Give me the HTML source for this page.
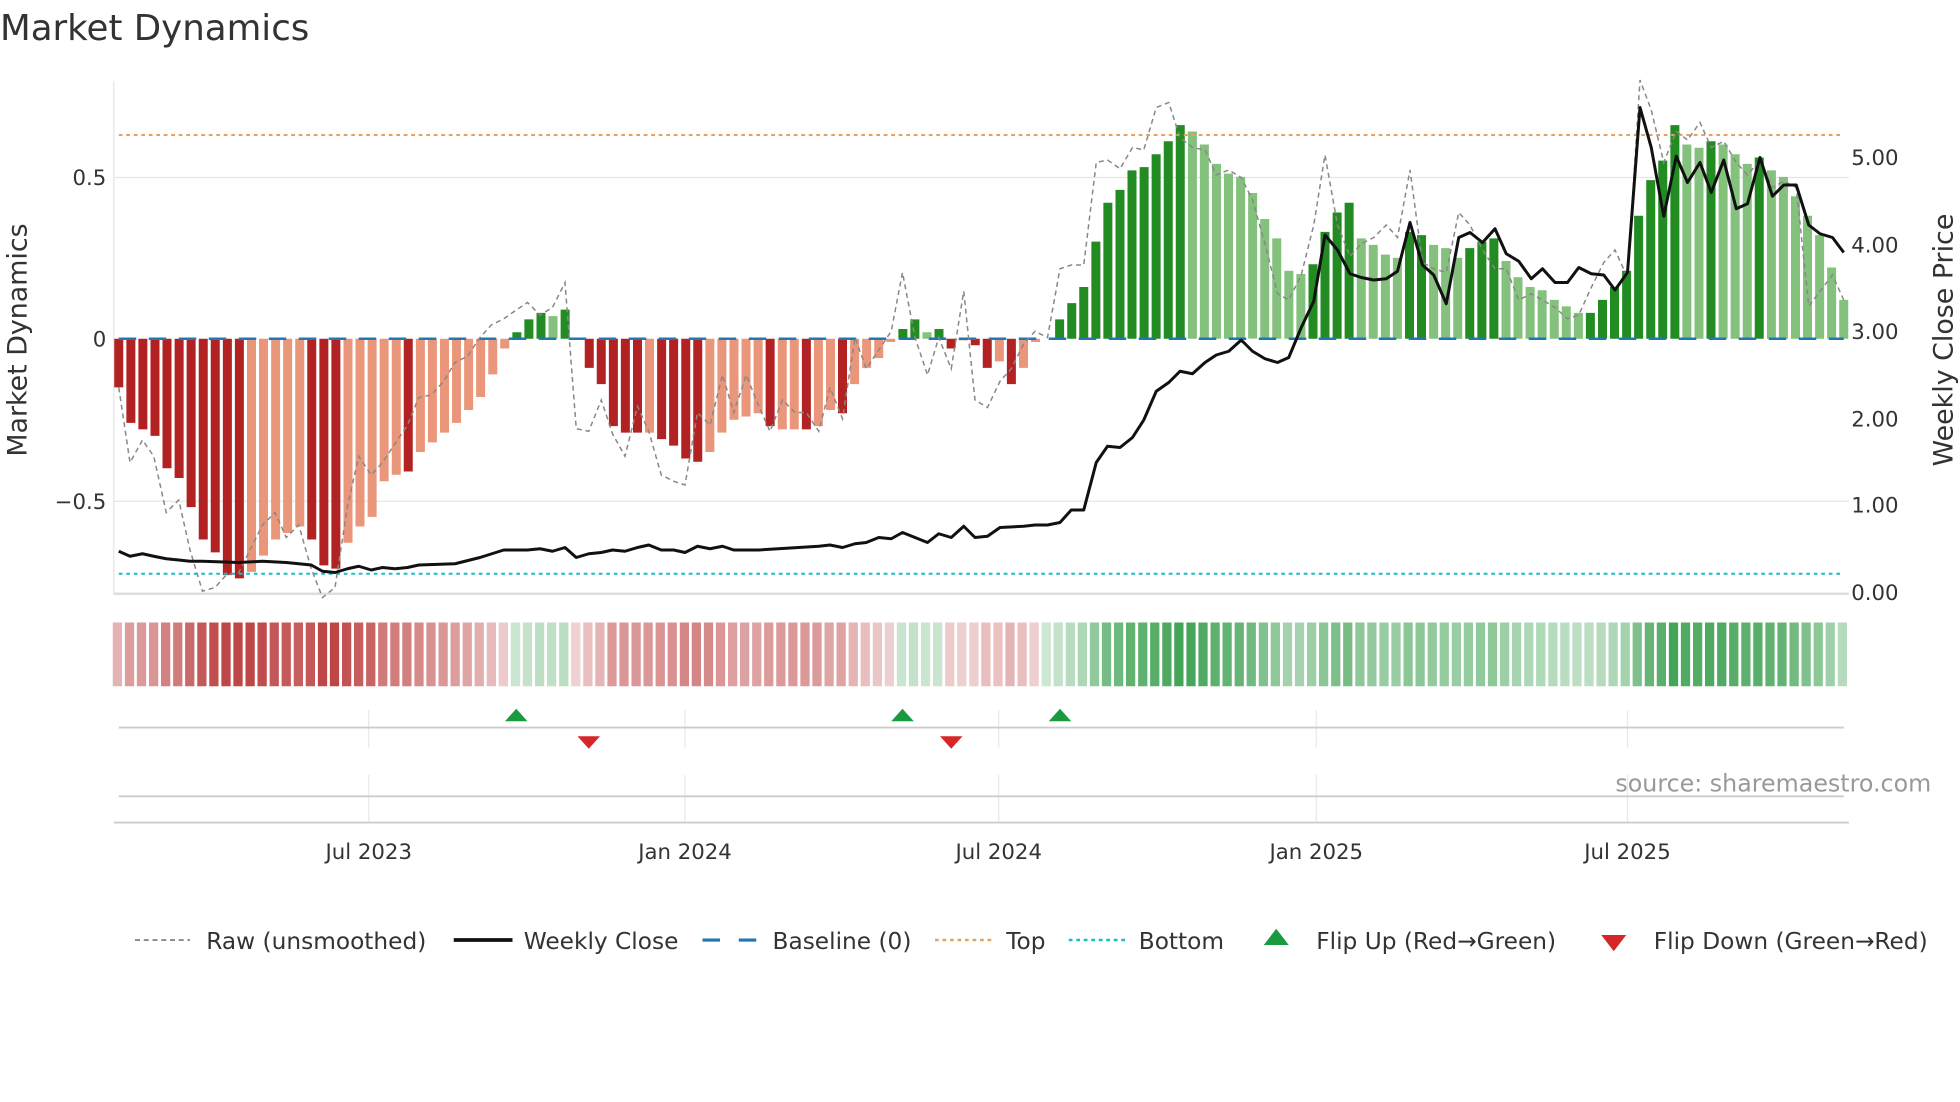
<!DOCTYPE html>
<html><head><meta charset="utf-8"><style>
html,body{margin:0;padding:0;background:#fff;width:1960px;height:1102px;overflow:hidden}
svg{display:block}
text{font-family:"DejaVu Sans","Liberation Sans",sans-serif;fill:#333}
</style></head><body>
<svg id="s" width="1960" height="1102" viewBox="0 0 1568 881.6" xmlns="http://www.w3.org/2000/svg">
<text x="0" y="32" font-size="28.5" fill="#333">Market Dynamics</text>
<g stroke="#e6e6e6" stroke-width="1">
<line x1="91" y1="142" x2="1479" y2="142"/>
<line x1="91" y1="401" x2="1479" y2="401"/>
<line x1="91" y1="475" x2="1479" y2="475" stroke="#ddd" stroke-width="2"/>
<line x1="91" y1="65" x2="91" y2="476"/>
</g>
<g id="bars"></g>
<g id="strip"></g>
<line x1="95" y1="108" x2="1475" y2="108" stroke="#e8a060" stroke-width="1.6" stroke-dasharray="3,3"/>
<line x1="95" y1="459" x2="1475" y2="459" stroke="#17becf" stroke-width="1.6" stroke-dasharray="3,3"/>
<line x1="95" y1="271" x2="1475" y2="271" stroke="#1f77b4" stroke-width="2" stroke-dasharray="14,10"/>
<polyline id="raw" fill="none" stroke="#888" stroke-width="1.2" stroke-dasharray="4,3"/>
<polyline id="close" fill="none" stroke="#111" stroke-width="2.4" stroke-linejoin="round"/>
<g font-size="17">
<text x="85" y="148" text-anchor="end">0.5</text>
<text x="85" y="277" text-anchor="end">0</text>
<text x="85" y="407" text-anchor="end">−0.5</text>
<text x="1481" y="132">5.00</text>
<text x="1481" y="202">4.00</text>
<text x="1481" y="271">3.00</text>
<text x="1481" y="341">2.00</text>
<text x="1481" y="410">1.00</text>
<text x="1481" y="480">0.00</text>
</g>
<text transform="translate(21,272) rotate(-90)" font-size="21.5" text-anchor="middle">Market Dynamics</text>
<text transform="translate(1562,272) rotate(-90)" font-size="21.5" text-anchor="middle">Weekly Close Price</text>
<g stroke="#e8e8e8" stroke-width="1">
<line x1="295" y1="568" x2="295" y2="598"/><line x1="548" y1="568" x2="548" y2="598"/><line x1="799" y1="568" x2="799" y2="598"/><line x1="1053" y1="568" x2="1053" y2="598"/><line x1="1302" y1="568" x2="1302" y2="598"/>
<line x1="295" y1="620" x2="295" y2="658"/><line x1="548" y1="620" x2="548" y2="658"/><line x1="799" y1="620" x2="799" y2="658"/><line x1="1053" y1="620" x2="1053" y2="658"/><line x1="1302" y1="620" x2="1302" y2="658"/>
</g>
<line x1="95" y1="582" x2="1475" y2="582" stroke="#ccc" stroke-width="1.5"/>
<line x1="95" y1="637" x2="1475" y2="637" stroke="#ccc" stroke-width="1.5"/>
<line x1="91" y1="658" x2="1479" y2="658" stroke="#ccc" stroke-width="1.5"/>
<g fill="#1a9a40"><polygon points="413,567 404,577 422,577"/><polygon points="722,567 713,577 731,577"/><polygon points="848,567 839,577 857,577"/></g>
<g fill="#d62728"><polygon points="471,599 462,589 480,589"/><polygon points="761,599 752,589 770,589"/></g>
<text x="1545" y="633" font-size="19" text-anchor="end" style="fill:#999">source: sharemaestro.com</text>
<g font-size="17" text-anchor="middle">
<text x="295" y="687">Jul 2023</text>
<text x="548" y="687">Jan 2024</text>
<text x="799" y="687">Jul 2024</text>
<text x="1053" y="687">Jan 2025</text>
<text x="1302" y="687">Jul 2025</text>
</g>
<g font-size="18.6">
<line x1="108" y1="752" x2="152" y2="752" stroke="#888" stroke-width="1.5" stroke-dasharray="4,3"/><text x="165" y="759">Raw (unsmoothed)</text>
<line x1="363" y1="752" x2="410" y2="752" stroke="#111" stroke-width="3"/><text x="419" y="759">Weekly Close</text>
<line x1="562" y1="752" x2="607" y2="752" stroke="#1f77b4" stroke-width="2.5" stroke-dasharray="14,15"/><text x="618" y="759">Baseline (0)</text>
<line x1="748" y1="752" x2="793" y2="752" stroke="#e8a060" stroke-width="2" stroke-dasharray="3,3"/><text x="805" y="759">Top</text>
<line x1="855" y1="752" x2="900" y2="752" stroke="#17becf" stroke-width="2" stroke-dasharray="3,3"/><text x="911" y="759">Bottom</text>
<polygon points="1021,743 1011,756 1031,756" fill="#1a9a40"/><text x="1053" y="759">Flip Up (Red→Green)</text>
<polygon points="1291,761 1281,748 1301,748" fill="#d62728"/><text x="1323" y="759">Flip Down (Green→Red)</text>
</g>
</svg>
<script>
var v=[[-.15,1],[-.26,1],[-.28,1],[-.3,1],[-.4,1],[-.43,1],[-.52,1],[-.62,1],[-.66,1],[-.73,1],[-.74,1],[-.72,0],[-.67,0],[-.62,0],[-.6,0],[-.58,0],[-.62,1],[-.7,1],[-.71,1],[-.63,0],[-.58,0],[-.55,0],[-.44,0],[-.42,0],[-.41,1],[-.35,0],[-.32,0],[-.29,0],[-.26,0],[-.22,0],[-.18,0],[-.11,0],[-.03,0],
[.02,1],[.06,1],[.08,1],[.07,0],[.09,1],[0,0],
[-.09,1],[-.14,1],[-.27,1],[-.29,1],[-.29,1],[-.29,0],[-.31,1],[-.33,1],[-.37,1],[-.38,1],[-.35,0],[-.29,0],[-.25,0],[-.24,0],[-.23,0],[-.27,1],[-.28,0],[-.28,0],[-.28,1],[-.27,0],[-.22,0],[-.23,1],[-.14,0],[-.09,0],[-.06,0],[-.01,0],
[.03,1],[.06,1],[.02,0],[.03,1],[-.03,1],[-.005,0],[-.02,1],[-.09,1],[-.07,0],[-.14,1],[-.09,0],[-.01,0],[0,0],
[.06,1],[.11,1],[.16,1],[.3,1],[.42,1],[.46,1],[.52,1],[.53,1],[.57,1],[.61,1],[.66,1],[.64,0],[.6,0],[.54,0],[.51,0],[.5,0],[.45,0],[.37,0],[.31,0],[.21,0],[.2,0],[.23,1],[.33,1],[.39,1],[.42,1],[.31,0],[.29,0],[.26,0],[.25,0],[.33,1],[.32,1],[.29,0],[.28,0],[.25,0],[.28,1],[.3,1],[.31,1],[.24,0],[.19,0],[.16,0],[.15,0],[.12,0],[.1,0],[.08,0],[.08,1],[.12,1],[.16,1],[.21,1],[.38,1],[.49,1],[.55,1],[.66,1],[.6,0],[.59,0],[.61,1],[.6,0],[.57,0],[.54,0],[.56,1],[.52,0],[.5,0],[.44,0],[.38,0],[.32,0],[.22,0],[.12,0]];
var n=v.length,st=(1475-95)/(n-1),b='',s='';
for(var i=0;i<n;i++){var x=95+i*st,a=v[i][0],d=v[i][1],h=Math.abs(a)*259;
if(a!==0){var c=a>0?(d?'#228b22':'#84c17d'):(d?'#b22222':'#e9967a');
b+='<rect x="'+(x-3.6).toFixed(1)+'" y="'+(a>0?271-h:271).toFixed(1)+'" width="7.2" height="'+h.toFixed(1)+'" fill="'+c+'"/>';}
var op=(0.25+0.75*Math.min(1,Math.abs(a)/0.7)).toFixed(2);
var sc=(a>0||(a===0&&i>40))?'rgb(60,160,80)':'rgb(190,70,70)';
s+='<rect x="'+(x-4.8).toFixed(1)+'" y="498" width="7.4" height="51" fill="'+sc+'" fill-opacity="'+op+'"/>';}
document.getElementById('bars').innerHTML=b;document.getElementById('strip').innerHTML=s;
document.getElementById('raw').setAttribute('points',"95,310 104,370 114,352 123,365 133,410 143,400 152,440 162,473 172,470 181,460 191,458 200,440 210,420 220,410 229,430 239,420 249,455 258,478 268,470 278,405 287,365 297,380 306,370 316,355 326,340 335,318 345,316 355,305 364,290 374,285 384,270 393,260 403,255 413,248 422,242 432,252 442,246 452,226 461,343 471,345 481,320 490,347 500,365 510,325 519,345 529,380 539,385 548,388 558,330 568,340 578,300 587,330 597,300 607,325 616,345 626,320 636,330 645,330 655,345 664,310 674,335 684,270 693,295 703,280 713,265 722,218 732,270 742,300 751,270 761,295 771,233 780,320 790,326 800,305 809,295 819,275 828,265 838,270 848,215 857,212 867,212 877,130 886,128 896,135 906,118 915,120 925,86 935,82 944,110 954,118 964,120 973,140 983,136 993,142 1002,160 1012,195 1022,235 1031,240 1041,220 1051,180 1060,124 1070,180 1080,205 1089,195 1099,190 1109,180 1118,190 1128,136 1138,210 1147,215 1157,218 1167,170 1176,180 1186,200 1196,215 1205,215 1215,240 1225,235 1234,240 1244,246 1254,255 1263,252 1273,230 1283,210 1292,200 1302,222 1312,64 1321,88 1331,130 1341,105 1350,112 1360,98 1369,118 1379,113 1389,130 1398,140 1408,128 1418,150 1427,145 1437,150 1447,245 1456,233 1466,220 1475,240");
document.getElementById('close').setAttribute('points',"95,441 104,445 114,443 123,445 133,447 143,448 152,449 162,449 191,450 210,449 229,450 249,452 258,457 268,458 278,455 287,453 297,456 306,454 316,455 326,454 335,452 364,451 384,446 403,440 422,440 432,439 442,441 452,438 461,446 471,443 481,442 490,440 500,441 510,438 519,436 529,440 539,440 548,442 558,437 568,439 578,437 587,440 607,440 655,437 664,436 674,438 684,435 693,434 703,430 713,431 722,426 732,430 742,434 751,427 761,430 771,421 780,430 790,429 800,422 819,421 828,420 838,420 848,418 857,408 867,408 877,370 886,357 896,358 906,350 915,336 925,313 935,306 944,297 954,299 964,290 973,284 983,281 993,272 1002,281 1012,287 1022,290 1031,286 1041,262 1051,241 1060,188 1070,200 1080,219 1089,222 1099,224 1109,223 1118,217 1128,178 1138,212 1147,220 1157,243 1167,190 1176,186 1186,194 1196,183 1205,203 1215,209 1225,223 1234,215 1244,226 1254,226 1263,214 1273,219 1283,220 1292,232 1302,218 1312,86 1321,118 1331,173 1341,125 1350,146 1360,130 1369,154 1379,128 1389,167 1398,163 1408,126 1418,157 1427,148 1437,148 1447,180 1456,187 1466,190 1475,202");
</script>
</body></html>
